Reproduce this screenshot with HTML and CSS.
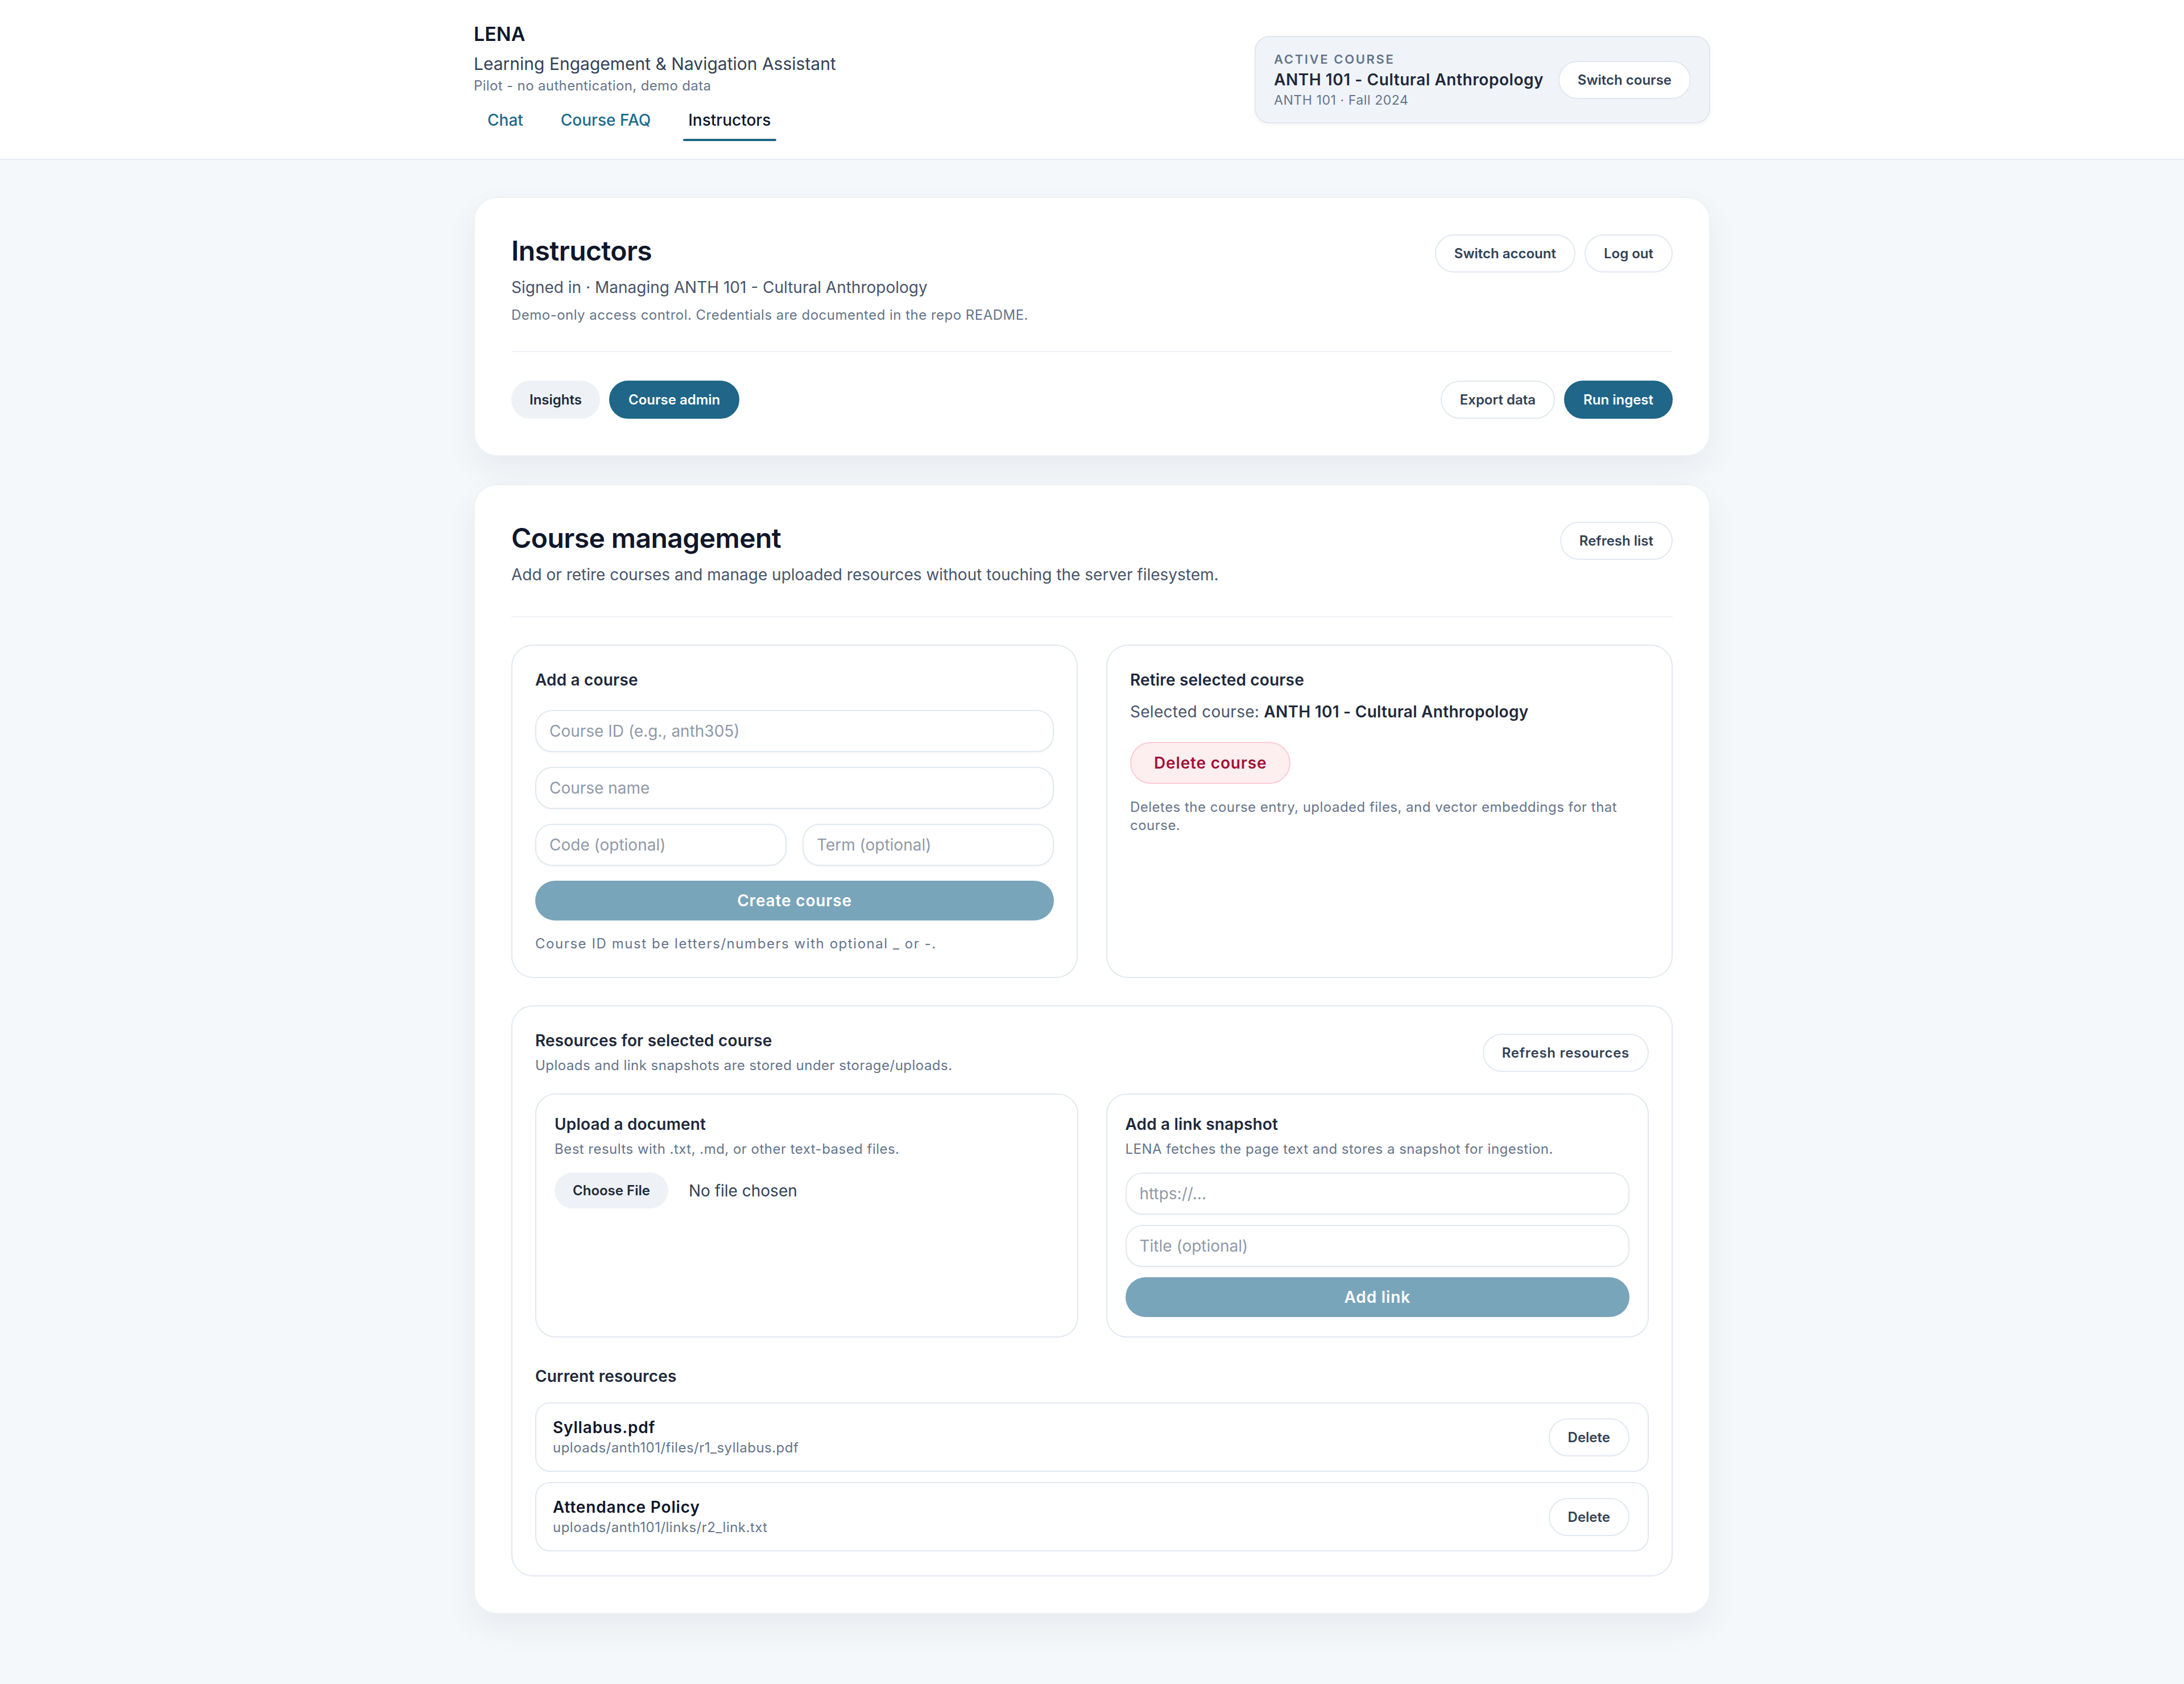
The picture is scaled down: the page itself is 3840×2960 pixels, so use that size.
FILE: index.html
```html
<!DOCTYPE html>
<html lang="en">
<head>
<meta charset="utf-8">
<title>LENA - Instructors</title>
<link rel="stylesheet" href="styles.css">
</head>
<body>
<header class="site-header">
  <div class="header-inner">
    <div class="brand">
      <div class="brand-name">LENA</div>
      <div class="brand-sub">Learning Engagement &amp; Navigation Assistant</div>
      <div class="brand-note">Pilot - no authentication, demo data</div>
      <nav class="tabs">
        <a class="tab">Chat</a>
        <a class="tab">Course FAQ</a>
        <a class="tab active">Instructors</a>
      </nav>
    </div>
    <div class="active-course">
      <div class="ac-text">
        <div class="ac-label">Active course</div>
        <div class="ac-name">ANTH 101 - Cultural Anthropology</div>
        <div class="ac-meta">ANTH 101 · Fall 2024</div>
      </div>
      <button class="btn">Switch course</button>
    </div>
  </div>
</header>

<main class="main">
  <section class="card">
    <div class="card-head">
      <div>
        <h1 class="card-title">Instructors</h1>
        <p class="card-sub">Signed in · Managing ANTH 101 - Cultural Anthropology</p>
        <p class="card-note">Demo-only access control. Credentials are documented in the repo README.</p>
      </div>
      <div class="btn-row">
        <button class="btn">Switch account</button>
        <button class="btn">Log out</button>
      </div>
    </div>
    <hr class="divider">
    <div class="toolbar">
      <div class="btn-row">
        <button class="btn btn-soft btn-insights">Insights</button>
        <button class="btn btn-primary">Course admin</button>
      </div>
      <div class="btn-row">
        <button class="btn">Export data</button>
        <button class="btn btn-primary">Run ingest</button>
      </div>
    </div>
  </section>

  <section class="card">
    <div class="card-head">
      <div>
        <h1 class="card-title">Course management</h1>
        <p class="card-sub">Add or retire courses and manage uploaded resources without touching the server filesystem.</p>
      </div>
      <button class="btn">Refresh list</button>
    </div>
    <hr class="divider divider-lg">

    <div class="grid-2">
      <div class="panel">
        <h2 class="panel-title">Add a course</h2>
        <div class="form">
          <input class="input" placeholder="Course ID (e.g., anth305)">
          <input class="input" placeholder="Course name">
          <div class="form-row">
            <input class="input" placeholder="Code (optional)">
            <input class="input" placeholder="Term (optional)">
          </div>
          <button class="btn-block" disabled>Create course</button>
        </div>
        <p class="help help-wide">Course ID must be letters/numbers with optional _ or -.</p>
      </div>
      <div class="panel">
        <h2 class="panel-title">Retire selected course</h2>
        <p class="selected">Selected course: <strong>ANTH 101 - Cultural Anthropology</strong></p>
        <button class="btn-danger">Delete course</button>
        <p class="help">Deletes the course entry, uploaded files, and vector embeddings for that course.</p>
      </div>
    </div>

    <div class="panel resources">
      <div class="res-head">
        <div>
          <h2 class="panel-title">Resources for selected course</h2>
          <p class="muted">Uploads and link snapshots are stored under storage/uploads.</p>
        </div>
        <button class="btn btn-wide">Refresh resources</button>
      </div>
      <div class="grid-2 sub-grid">
        <div class="subpanel">
          <h3 class="panel-title">Upload a document</h3>
          <p class="muted">Best results with .txt, .md, or other text-based files.</p>
          <div class="file-row">
            <button class="btn btn-soft btn-file">Choose File</button>
            <span class="file-name">No file chosen</span>
          </div>
        </div>
        <div class="subpanel">
          <h3 class="panel-title">Add a link snapshot</h3>
          <p class="muted">LENA fetches the page text and stores a snapshot for ingestion.</p>
          <div class="form form-tight">
            <input class="input" placeholder="https://...">
            <input class="input" placeholder="Title (optional)">
            <button class="btn-block" disabled>Add link</button>
          </div>
        </div>
      </div>

      <h3 class="panel-title current">Current resources</h3>
      <ul class="res-list">
        <li class="res-item">
          <div>
            <div class="res-name">Syllabus.pdf</div>
            <div class="res-path">uploads/anth101/files/r1_syllabus.pdf</div>
          </div>
          <button class="btn">Delete</button>
        </li>
        <li class="res-item">
          <div>
            <div class="res-name">Attendance Policy</div>
            <div class="res-path">uploads/anth101/links/r2_link.txt</div>
          </div>
          <button class="btn">Delete</button>
        </li>
      </ul>
    </div>
  </section>
</main>
</body>
</html>
```

FILE: styles.css
```css
* { box-sizing: border-box; }

html, body {
  margin: 0;
  padding: 0;
}

body {
  font-family: Inter, "Noto Sans", "Liberation Sans", sans-serif;
  background: #f5f8fb;
  color: #0f172a;
  min-height: 2960px;
}

p, h1, h2, h3, ul { margin: 0; padding: 0; }

/* ---------- header ---------- */
.site-header {
  background: #ffffff;
  border-bottom: 2px solid #e4e9f0;
}

.header-inner {
  width: 2174px;
  margin: 0 auto;
  padding: 39px 0 31px;
  display: flex;
  justify-content: space-between;
  align-items: flex-start;
}

.brand-name {
  font-size: 34px;
  line-height: 41px;
  font-weight: 600;
  color: #0f172a;
}

.brand-sub {
  margin-top: 14px;
  font-size: 30px;
  line-height: 36px;
  color: #334155;
  font-weight: 400;
}

.brand-note {
  margin-top: 5px;
  font-size: 24px;
  line-height: 32px;
  color: #64748b;
  letter-spacing: 0.015em;
}

.tabs {
  display: flex;
  gap: 18px;
  margin-top: 19px;
}

.tab {
  position: relative;
  padding: 8px 24px 20px;
  font-size: 28px;
  line-height: 34px;
  color: #1f6a8a;
  font-weight: 500;
  cursor: pointer;
}

.tab.active {
  color: #0f172a;
}

.tab.active::after {
  content: "";
  position: absolute;
  left: 15px;
  right: 14px;
  bottom: 0;
  height: 4px;
  border-radius: 4px;
  background: #1f6688;
}

.active-course {
  margin-top: 24px;
  width: 801px;
  height: 154px;
  padding: 0 32px;
  display: flex;
  align-items: center;
  justify-content: space-between;
  gap: 16px;
  background: #f0f4f9;
  border: 2px solid #e1e7ef;
  border-radius: 26px;
  box-shadow: 0 4px 10px rgba(15, 23, 42, 0.04);
}

.ac-text {
  flex-shrink: 0;
  white-space: nowrap;
}

.active-course .btn {
  flex-shrink: 0;
}

.ac-label {
  font-size: 22px;
  line-height: 28px;
  font-weight: 600;
  letter-spacing: 0.12em;
  text-transform: uppercase;
  color: #64748b;
}

.ac-name {
  margin-top: 5px;
  font-size: 28px;
  line-height: 34px;
  font-weight: 600;
  letter-spacing: 0.02em;
  color: #1e293b;
}

.ac-meta {
  margin-top: 5px;
  font-size: 23px;
  line-height: 28px;
  letter-spacing: 0.025em;
  color: #64748b;
}

/* ---------- buttons ---------- */
.btn {
  font-family: inherit;
  font-size: 24px;
  line-height: 29px;
  font-weight: 600;
  padding: 17px 32px;
  border: 2px solid #e2e8f0;
  border-radius: 999px;
  background: #ffffff;
  color: #334155;
  white-space: nowrap;
  cursor: pointer;
}

.btn-primary {
  background: #1f6688;
  border-color: #1f6688;
  color: #ffffff;
}

.btn-soft {
  background: #eef2f7;
  border-color: #eef2f7;
  color: #1e293b;
}

.btn-insights {
  padding-left: 30px;
  padding-right: 30px;
}

.btn-wide {
  letter-spacing: 0.03em;
}

.btn-row {
  display: flex;
  gap: 16px;
}

/* ---------- layout ---------- */
.main {
  width: 2174px;
  margin: 0 auto;
  padding: 65px 0 64px;
  display: flex;
  flex-direction: column;
  gap: 49px;
}

.card {
  background: #ffffff;
  border: 2px solid #edf1f6;
  border-radius: 40px;
  padding: 64px;
  box-shadow: 0 24px 56px rgba(15, 23, 42, 0.06);
}

.card-head {
  display: flex;
  justify-content: space-between;
  align-items: flex-start;
  gap: 32px;
}

.card-title {
  font-size: 48px;
  line-height: 58px;
  font-weight: 600;
  letter-spacing: -0.012em;
  color: #0f172a;
}

.card-sub {
  margin-top: 16px;
  font-size: 28px;
  line-height: 39px;
  color: #475569;
}

.card-note {
  margin-top: 13px;
  font-size: 24px;
  line-height: 32px;
  letter-spacing: 0.02em;
  color: #64748b;
}

.divider {
  border: 0;
  height: 2px;
  background: #eef2f6;
  margin: 47px 0 50px;
}

.divider-lg {
  margin: 53px 0 48px;
}

.toolbar {
  display: flex;
  justify-content: space-between;
  align-items: center;
}

.grid-2 {
  display: grid;
  grid-template-columns: 1fr 1fr;
  gap: 50px;
}

.panel {
  border: 2px solid #e2e8f0;
  border-radius: 38px;
  padding: 42px 40px;
  background: #ffffff;
}

.panel-title {
  font-size: 28px;
  line-height: 36px;
  font-weight: 600;
  letter-spacing: 0.006em;
  color: #1e293b;
}

.form {
  margin-top: 35px;
  display: flex;
  flex-direction: column;
  gap: 26px;
}

.form-row {
  display: grid;
  grid-template-columns: 1fr 1fr;
  gap: 28px;
}

.input {
  width: 100%;
  font-family: inherit;
  font-size: 28px;
  line-height: 36px;
  padding: 17px 23px;
  border: 2px solid #e2e8f0;
  border-radius: 30px;
  background: #ffffff;
  color: #0f172a;
  outline: none;
  box-shadow: 0 2px 4px rgba(15, 23, 42, 0.03);
}

.input::placeholder {
  color: #8f99a8;
}

.btn-block {
  width: 100%;
  font-family: inherit;
  font-size: 28px;
  line-height: 36px;
  font-weight: 600;
  letter-spacing: 0.03em;
  padding: 17px 24px;
  border: 0;
  border-radius: 999px;
  background: #79a5bb;
  color: #ffffff;
}

.help {
  margin-top: 25px;
  font-size: 24px;
  line-height: 32px;
  letter-spacing: 0.02em;
  color: #64748b;
}

.help-wide {
  letter-spacing: 0.065em;
}

.selected {
  margin-top: 20px;
  font-size: 28px;
  line-height: 36px;
  letter-spacing: 0.01em;
  color: #475569;
}

.selected strong {
  font-weight: 600;
  color: #1e293b;
}

.btn-danger {
  display: block;
  margin-top: 35px;
  font-family: inherit;
  font-size: 28px;
  line-height: 36px;
  font-weight: 600;
  letter-spacing: 0.03em;
  padding: 17px 40px;
  border: 2px solid #fdccd4;
  border-radius: 999px;
  background: #fdeef0;
  color: #9f1239;
}

/* ---------- resources ---------- */
.resources {
  margin-top: 48px;
}

.res-head {
  display: flex;
  justify-content: space-between;
  align-items: center;
}

.muted {
  margin-top: 10px;
  font-size: 24px;
  line-height: 32px;
  letter-spacing: 0.02em;
  color: #64748b;
}

.sub-grid {
  margin-top: 33px;
  gap: 49px;
}

.subpanel {
  border: 2px solid #e2e8f0;
  border-radius: 36px;
  padding: 34px 32px;
}

.file-row {
  margin-top: 25px;
  display: flex;
  align-items: center;
  gap: 36px;
}

.btn-file {
  border: 0;
  padding: 17px 32px;
}

.file-name {
  font-size: 28px;
  line-height: 36px;
  color: #334155;
}

.form-tight {
  margin-top: 25px;
  gap: 18px;
}

.current {
  margin-top: 50px;
}

.res-list {
  list-style: none;
  margin-top: 28px;
  display: flex;
  flex-direction: column;
  gap: 18px;
}

.res-item {
  display: flex;
  justify-content: space-between;
  align-items: center;
  padding: 25px 32px 25px 29px;
  border: 2px solid #e2e8f0;
  border-radius: 26px;
}

.res-name {
  font-size: 28px;
  line-height: 34px;
  font-weight: 600;
  letter-spacing: 0.03em;
  color: #0f172a;
}

.res-path {
  margin-top: 4px;
  font-size: 24px;
  line-height: 30px;
  letter-spacing: 0.02em;
  color: #64748b;
}
```
